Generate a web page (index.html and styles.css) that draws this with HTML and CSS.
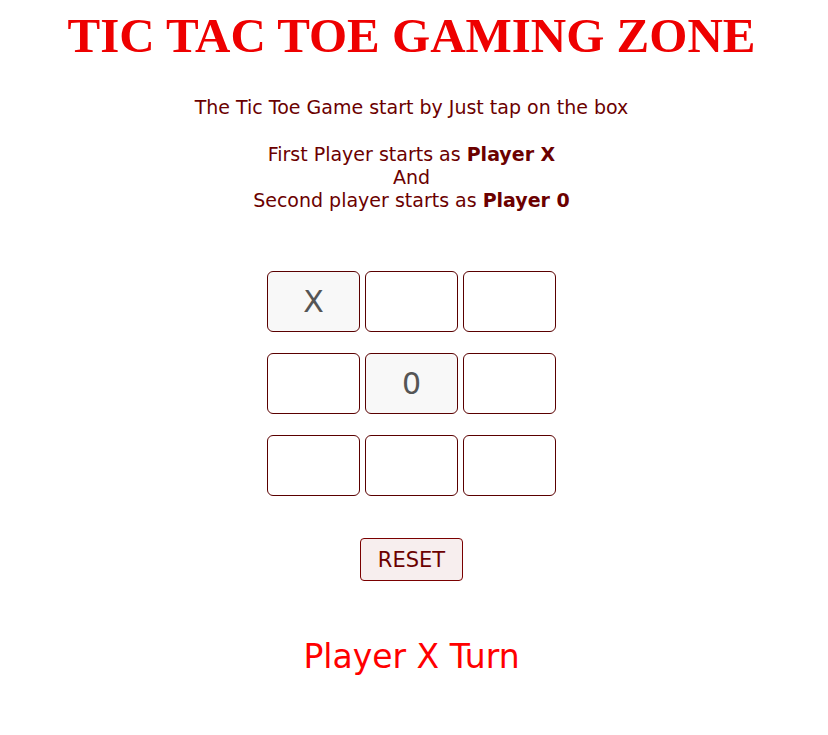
FILE: index.html
```html
<!DOCTYPE html>
<html>
<head>
<meta charset="utf-8">
<link rel="stylesheet" href="styles.css">
</head>
<body>
<h1 class="title">TIC TAC TOE GAMING ZONE</h1>
<p class="intro">The Tic Toe Game start by Just tap on the box</p>
<p class="rules">First Player starts as <b>Player X</b><br>And<br>Second player starts as <b>Player 0</b></p>
<div class="board">
  <button class="cell filled">X</button>
  <button class="cell"></button>
  <button class="cell"></button>
  <button class="cell"></button>
  <button class="cell filled">0</button>
  <button class="cell"></button>
  <button class="cell"></button>
  <button class="cell"></button>
  <button class="cell"></button>
</div>
<div class="actions"><button class="reset">RESET</button></div>
<p class="turn">Player X Turn</p>
</body>
</html>
```
FILE: styles.css
```css
body {
  margin: 8px;
  padding-right: 5px;
  font-family: "DejaVu Sans", Verdana, sans-serif;
  color: #6b0000;
  text-align: center;
  background: #fff;
}
.title {
  font-family: "Liberation Serif", "Times New Roman", serif;
  font-weight: bold;
  font-size: 49px;
  color: #ee0000;
  margin: 0;
  line-height: 55px;
}
.intro {
  font-size: 19px;
  margin: 33px 0 0;
  line-height: 23px;
}
.rules {
  font-size: 19px;
  margin: 24px 0 0;
  line-height: 23px;
}
.board {
  display: grid;
  grid-template-columns: repeat(3, 93px);
  grid-auto-rows: 61px;
  column-gap: 5px;
  row-gap: 21px;
  justify-content: center;
  margin-top: 59px;
}
.cell {
  border: 1px solid #5a0000;
  border-radius: 6px;
  background: #fff;
  font-family: "DejaVu Sans", Verdana, sans-serif;
  font-size: 30px;
  color: #555;
  padding: 0;
}
.cell.filled {
  background: #f8f8f8;
}
.actions {
  margin-top: 42px;
}
.reset {
  font-family: "DejaVu Sans", Verdana, sans-serif;
  font-size: 21px;
  color: #6b0000;
  background: #f7eeee;
  border: 1px solid #7a0000;
  border-radius: 4px;
  width: 103px;
  height: 43px;
  padding: 0;
}
.turn {
  font-size: 33px;
  color: #ff0000;
  margin: 56px 0 0;
}
```
